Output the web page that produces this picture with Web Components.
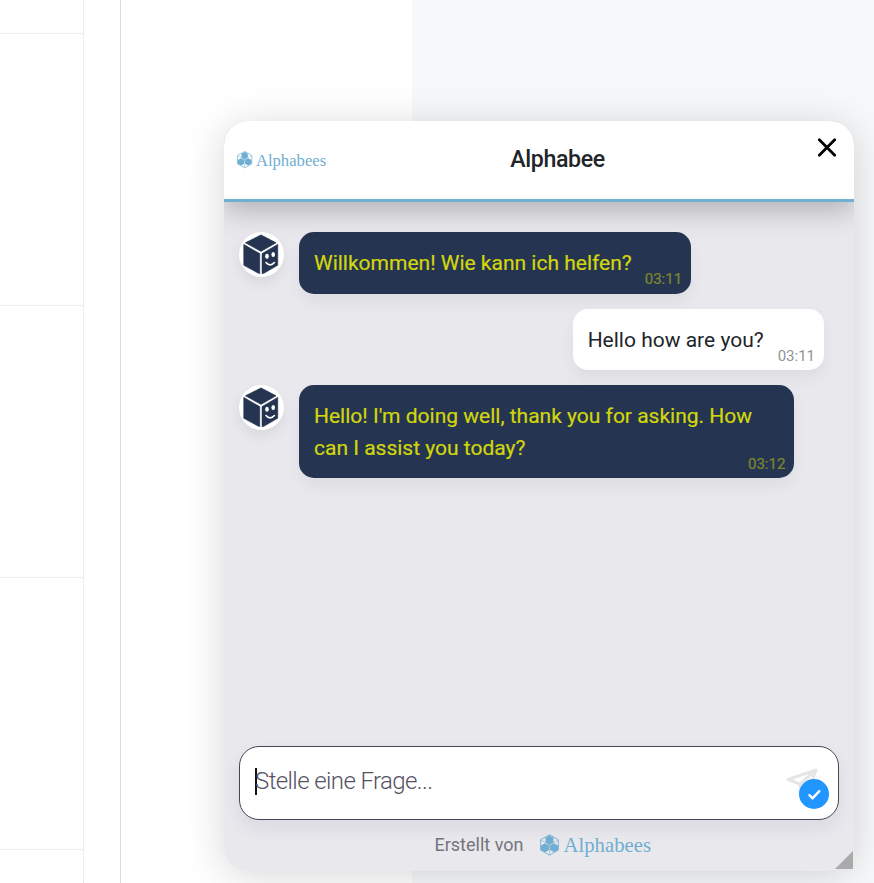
<!DOCTYPE html>
<html lang="de">
<head>
<meta charset="utf-8">
<title>Alphabee</title>
<style>
html,body{margin:0;height:100%;overflow:hidden;background:#fff;font-family:Roboto,"Liberation Sans",sans-serif;color:#212529}
</style>
</head>
<body>
<chat-page></chat-page>
<script>
const define = (name, html) => customElements.define(name, class extends HTMLElement {
  constructor() {
    super();
    this.attachShadow({ mode: 'open' }).innerHTML = html;
    const t = this.shadowRoot.querySelector('.time');
    if (t) t.textContent = this.getAttribute('time');
  }
});

define('brand-logo', `
<style>:host{display:block}svg{display:block;width:100%;height:100%;overflow:visible}</style>
<svg viewBox="0 0 112 24" fill="#70aed2">
  <path d="M9.500 1.800 18.400 6.800V17L9.500 22.200.6 17V6.800Z" fill="none" stroke="#70aed2" stroke-width=".9"/>
  <path d="M9.500 2v20M.6 7l9 5 8.800-5M.6 17l9-5 8.800 5" fill="none" stroke="#70aed2" stroke-width=".55"/>
  <path d="M9.500 2.500 13.500 4.800v4.600l-4 2.300-4-2.300V4.800ZM5 10.200l4 2.200v4.600l-4 2.300-4-2.300v-4.600ZM14 10.200l4 2.200v4.600l-4 2.300-4-2.300v-4.600Z"/>
  <text x="23.500" y="19.300" font-family="Liberation Serif" font-size="21.500" textLength="87.500" lengthAdjust="spacingAndGlyphs">Alphabees</text>
</svg>`);

define('bee-avatar', `
<style>:host{display:block;width:45px;height:45px;border-radius:50%;background:#fff;box-shadow:0 6px 14px rgba(0,0,0,.07)}svg{display:block}</style>
<svg width="45" height="45" viewBox="0 0 45 45">
  <path d="M22 3 37 10.800 22 19.300 6.500 10.800Z" fill="#253551" stroke="#253551" stroke-width=".8" stroke-linejoin="round"/>
  <path d="M4.700 12.300 20.800 21.600V41.700L18.800 41 4.700 33.300Z" fill="#253551" stroke="#253551" stroke-width=".5" stroke-linejoin="round"/>
  <path d="M23 21.600 38.800 12.300V33.300L25 41.300 23 41.700Z" fill="#253551" stroke="#253551" stroke-width=".5" stroke-linejoin="round"/>
  <ellipse cx="28" cy="24.200" rx="1.800" ry="2.500" fill="#fff"/><ellipse cx="34.200" cy="22.600" rx="1.800" ry="2.500" fill="#fff"/>
  <path d="M27 30.500q4 4.700 8.400 0" fill="none" stroke="#fff" stroke-width="1.600" stroke-linecap="round"/>
</svg>`);

define('bot-message', `
<style>
:host{display:flex;gap:15px;align-items:flex-start;margin-bottom:15px}
.b{box-sizing:border-box;display:flex;height:62px;border-radius:15px;background:#253551;color:#d2d60b;padding:15px 9px 5px 15px;box-shadow:0 8px 16px rgba(0,0,0,.05)}
.m{font-size:21px;line-height:32px;-webkit-text-stroke:.2px #d2d60b}
.time{align-self:flex-end;margin-left:13px;font-size:15px;line-height:20px;opacity:.5;-webkit-text-stroke:.2px #d2d60b}
:host([long]) .b{width:495px;height:93px;padding-bottom:4px}
:host([long]) .m{width:445px;flex:none}
:host([long]) .time{margin-left:-11px}
</style>
<bee-avatar></bee-avatar><div class="b"><div class="m"><slot></slot></div><span class="time"></span></div>`);

define('user-message', `
<style>
:host{display:flex;justify-content:flex-end;margin:0 15px 15px 0}
.b{display:flex;box-sizing:border-box;height:61px;border-radius:15px;background:#fff;padding:15px 9px 4px 15px;box-shadow:0 8px 16px rgba(0,0,0,.05)}
.m{font-size:21px;line-height:32px}
.time{align-self:flex-end;margin-left:14px;font-size:15px;line-height:20px;opacity:.5}
</style><div class="b"><div class="m"><slot></slot></div><span class="time"></span></div>`);

define('chat-header', `
<style>
:host{box-sizing:border-box;position:relative;z-index:1;display:grid;grid-template-columns:1fr auto 1fr;align-items:center;height:81px;background:#fff;border-bottom:3px solid #70aed2;box-shadow:0 8px 28px rgba(0,0,0,.25);padding:0 18px 0 12.500px}
brand-logo{width:90px;height:19.300px}
h1{margin:0 0 3px 42.500px;font-size:23.200px;line-height:32px;font-weight:500;letter-spacing:-.4px;color:#212529}
svg{justify-self:end;align-self:start;margin-top:17px}
</style>
<brand-logo></brand-logo><h1><slot></slot></h1>
<svg width="18" height="19" viewBox="0 0 18 19"><path d="M1.300 1.800 16.700 17.200M16.700 1.800 1.300 17.200" stroke="#000" stroke-width="2.800" stroke-linecap="round"/></svg>`);

define('chat-input', `
<style>
:host{position:relative;box-sizing:border-box;display:flex;align-items:center;height:74px;margin:0 15px;border:1px solid #484453;border-radius:20px;background:#fff;padding:0 20.500px 0 15px;box-shadow:0 8px 18px rgba(60,20,80,.07)}
.caret{width:2px;height:27px;background:#111;margin-right:-2px;margin-top:-3px}
.p{flex:1;font-size:24px;line-height:30px;font-weight:300;letter-spacing:-.6px;color:#55515f;margin-top:-4px}
.send{margin-bottom:5px}
.ok{position:absolute;right:9px;bottom:10px}
</style>
<span class="caret"></span><span class="p"><slot></slot></span>
<svg class="send" width="32" height="27" viewBox="0 0 32 27" fill="none" stroke="#e6e6e6" stroke-width="3" stroke-linejoin="round"><path d="M2 12.500 30 3 23 23 14 17ZM14 17 29 4M14 17v8l4-5"/></svg>
<svg class="ok" width="30" height="30" viewBox="0 0 30 30"><circle cx="15" cy="15" r="15" fill="#2196ff"/><path d="M10.500 16.200 13.500 19.300 20.300 12.200" fill="none" stroke="#fff" stroke-width="2.400" stroke-linecap="round" stroke-linejoin="round"/></svg>`);

define('chat-footer', `
<style>
:host{box-sizing:border-box;display:flex;height:51px;align-items:center;padding:0 0 2px 210.500px;font-size:18px;color:#74747b}
span{margin-right:17px}brand-logo{width:112px;height:24px}
</style><span>Erstellt von</span><brand-logo></brand-logo>`);

define('chat-window', `
<style>
:host{display:flex;flex-direction:column;position:absolute;left:224px;top:121px;width:630px;height:750px;border-radius:24px;background:#e9e8ed;box-shadow:0 5px 40px rgba(0,0,0,.16)}
chat-header{border-radius:24px 24px 0 0;clip-path:inset(0 0 -45px 0 round 24px 24px 0 0)}
main{flex:1;padding:30px 15px 0}
.grip{position:absolute;right:1px;bottom:2px;width:18px;height:18px;background:#aaa;clip-path:polygon(100% 0,100% 100%,0 100%)}
</style>
<chat-header>Alphabee</chat-header>
<main><slot></slot></main>
<chat-input>Stelle eine Frage...</chat-input>
<chat-footer></chat-footer><i class="grip"></i>`);

define('page-grid', `
<style>
:host{display:grid;grid-template-columns:84px 37px 291px 1fr;height:883px}
.days{box-sizing:border-box;border-right:1px dotted #ddd;display:grid;grid-template-rows:34px 272px 272px 272px;min-height:0}
.days i{border-bottom:1px dotted #ddd}
.line{border-right:1px solid #ddd}.side{grid-column:4;background:#f7f8fa}
</style><div class="days"><i></i><i></i><i></i><i></i></div><div class="line"></div><div class="side"></div>`);

define('chat-page', `
<style>:host{display:block;position:relative;width:874px;height:883px;overflow:hidden}</style>
<page-grid></page-grid>
<chat-window>
<bot-message time="03:11">Willkommen! Wie kann ich helfen?</bot-message>
<user-message time="03:11">Hello how are you?</user-message>
<bot-message long time="03:12">Hello! I'm doing well, thank you for asking. How can I assist you today?</bot-message>
</chat-window>`);
</script>
</body>
</html>
